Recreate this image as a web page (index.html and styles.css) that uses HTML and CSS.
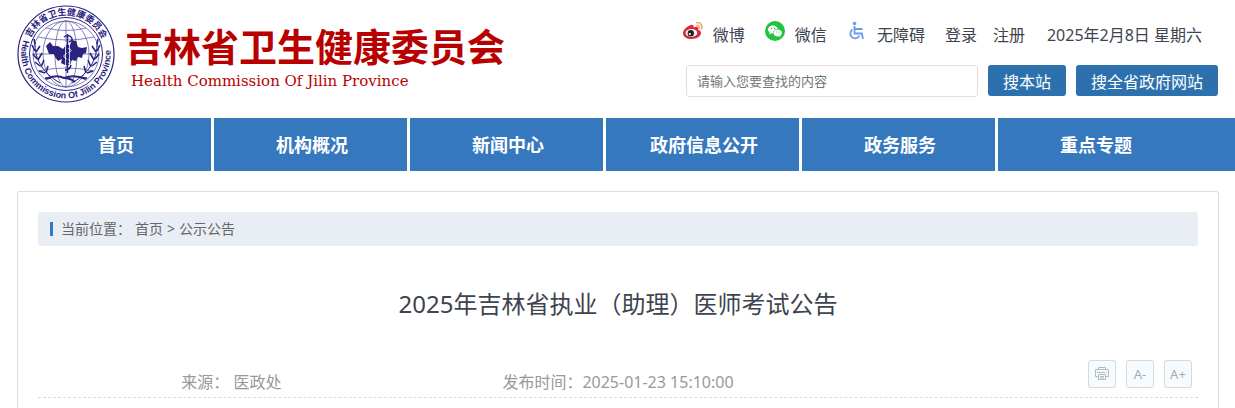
FILE: index.html
```html
<!DOCTYPE html>
<html lang="zh-CN">
<head>
    <meta charset="UTF-8">
    <meta name="viewport" content="width=device-width, initial-scale=1.0">
    <title>2025年吉林省执业（助理）医师考试公告</title>
    <link rel="stylesheet" href="styles.css">
</head>
<body>
    <header class="header">
        <div class="brand">
            <svg class="emblem" viewBox="-49 -49 98 98" aria-hidden="true">
                <defs>
                    <path id="ringTop" d="M-35.5 -16 A39 39 0 0 1 35.5 -16"/>
                    <path id="ringBottom" d="M-42.5 -14 A44.7 44.7 0 1 0 44 -8"/>
                </defs>
                <g fill="none" stroke="#2b2380">
                    <circle r="48" stroke-width="1.2"/>
                    <circle r="36.5" stroke-width="1"/>
                    <g stroke-width="0.8" stroke="#6660a8">
                        <circle r="33"/>
                        <ellipse rx="11" ry="33"/>
                        <ellipse rx="23" ry="33"/>
                        <path d="M0 -33V33M-33 0H33M-28 -17Q0 -11 28 -17M-28 17Q0 11 28 17M-20 -26Q0 -21 20 -26"/>
                    </g>
                    <path d="M-31 -12Q-32 14 -6 29M31 -12Q32 14 6 29" stroke-width="1"/>
                    <path d="M-31 -10l-1-5M-31 -3l-3-6M-30 -2l4-6M-29 5l-4-5M-28 6l4-7M-26 12l-5-4M-25 13l3-7M-21 19l-6-2M-20 19l2-7M-15 24l-6 0M31 -10l1-5M31 -3l3-6M30 -2l-4-6M29 5l4-5M28 6l-4-7M26 12l5-4M25 13l-3-7M21 19l6-2M20 19l-2-7M15 24l6 0" stroke-width="1.6"/>
                    <path d="M-20 25Q-10 20 -2 24Q8 20 20 25M-2 24Q4 24 9 28" stroke-width="2"/>
                </g>
                <path fill="#2b2380" d="M-20 -8L-16 -12 -13 -8 -8 -8 -3 -5 0 -9 4 -9 6 -14 10 -13 12 -7 16 -6 21 -7 20 -1 17 0 16 4 12 3 10 7 6 6 4 11 -1 11 -5 9 -4 5 -8 7 -11 3 -12 0 -17 0z"/>
                <path fill="none" stroke="#fff" stroke-width="0.8" d="M-0.500 -12V12M3.500 -12V12M1 -6q8 2 1 5q-8 3 -1 6q6 2 1 5"/>
                <path fill="none" stroke="#2b2380" stroke-width="1.5" d="M1.500 -20V19M-2 -17q4 -3 7 0q3 3 -2 5M5 11q-1 5 -6 5"/>
                <text class="ring-cn"><textPath href="#ringTop">吉林省卫生健康委员会</textPath></text>
                <text class="ring-en"><textPath href="#ringBottom">Health Commission Of Jilin Province</textPath></text>
            </svg>
            <div class="brand-text">
                <div class="brand-cn">吉林省卫生健康委员会</div>
                <div class="brand-en">Health Commission Of Jilin Province</div>
            </div>
        </div>

        <div class="tools">
            <div class="top-links">
                <a href="#" class="social">
                    <svg class="icon" viewBox="0 0 20 20" aria-hidden="true">
                        <path fill="#d52b3e" d="M8 4C4 5 0 9 0 12c0 4 4 6 8.500 6C14 18 18 15 18 12c0-2-1.500-3-3-3.300C16 6 14 5 10.500 6.500 11 4.500 10 3.500 8 4z"/>
                        <ellipse cx="8.400" cy="12" rx="5.800" ry="3.900" fill="#fff"/>
                        <circle cx="7.800" cy="12.200" r="3.200" fill="#222"/>
                        <circle cx="6.800" cy="13" r="1.100" fill="#fff"/>
                        <path fill="none" stroke="#f5a860" stroke-width="1.500" stroke-linecap="round" d="M13.500 1.700c4-1 6.500 3 5 6.300M14 4.500c2-.4 2.700 1.200 2 2.800"/>
                    </svg>
                    微博
                </a>
                <a href="#" class="social">
                    <svg class="icon" viewBox="0 0 20 20" aria-hidden="true">
                        <circle cx="10" cy="10" r="10" fill="#22c43c"/>
                        <path fill="#fff" d="M8 4.500c-2.800 0-5 1.800-5 4.100 0 1.300.7 2.400 1.800 3.200l-.5 1.600 1.900-1c.6.200 1.200.2 1.800.2C8 9.500 10 8 12.800 8 12.300 6 10.300 4.500 8 4.500z"/>
                        <path fill="#fff" d="M12.700 8.600c-2.400 0-4.200 1.500-4.200 3.400s1.800 3.400 4.200 3.400c.5 0 1-.1 1.400-.2l1.500.8-.4-1.300c1-.6 1.700-1.600 1.700-2.700 0-1.900-1.800-3.400-4.200-3.400z"/>
                        <g fill="#22c43c">
                            <circle cx="6.400" cy="7.500" r=".7"/>
                            <circle cx="9.600" cy="7.500" r=".7"/>
                            <circle cx="11.400" cy="11" r=".6"/>
                            <circle cx="14.100" cy="11" r=".6"/>
                        </g>
                    </svg>
                    微信
                </a>
                <a href="#" class="social">
                    <svg class="icon" viewBox="0 0 20 20" aria-hidden="true">
                        <g fill="none" stroke="#6a9bea" stroke-width="1.800">
                            <path d="M7.500 5V12.500h7.300l1.200 5.500M7.500 8h8"/>
                            <path d="M5.500 8.500a4.800 4.800 0 1 0 7 6"/>
                        </g>
                        <circle cx="7.500" cy="2.500" r="1.800" fill="#6a9bea"/>
                    </svg>
                    无障碍
                </a>
                <a href="#">登录</a>
                <a href="#">注册</a>
                <span class="date">2025年2月8日 星期六</span>
            </div>
            <form class="search">
                <input type="text" class="search-input" placeholder="请输入您要查找的内容" aria-label="搜索">
                <button type="button" class="search-btn">搜本站</button>
                <button type="button" class="search-btn">搜全省政府网站</button>
            </form>
        </div>
    </header>

    <nav class="nav">
        <a href="#">首页</a>
        <a href="#">机构概况</a>
        <a href="#">新闻中心</a>
        <a href="#">政府信息公开</a>
        <a href="#">政务服务</a>
        <a href="#">重点专题</a>
    </nav>

    <main class="content">
        <div class="breadcrumb">
            <span class="breadcrumb-label">当前位置：</span>
            <a href="#">首页</a>
            <span>&gt;</span>
            <a href="#">公示公告</a>
        </div>

        <h1 class="title">2025年吉林省执业（助理）医师考试公告</h1>

        <div class="meta">
            <span>来源： 医政处</span>
            <span>发布时间：2025-01-23 15:10:00</span>
            <div class="actions">
                <button type="button" class="action" aria-label="打印">
                    <svg class="print" viewBox="0 0 16 16" aria-hidden="true">
                        <g fill="none" stroke="#b5babd">
                            <path d="M4.500 3.500v-2h7v2M4.500 10.500h-3v-7h13v7h-3M3 6.500h8M12 6.500h1"/>
                            <path d="M4.500 8.500h7v5h-7zM6 10.500h4M6 12h4"/>
                        </g>
                    </svg>
                </button>
                <button type="button" class="action">A-</button>
                <button type="button" class="action">A+</button>
            </div>
        </div>
    </main>
</body>
</html>
```

FILE: styles.css
```css
* {
    box-sizing: border-box;
}

body {
    margin: 0;
    font-family: "Noto Sans", "Noto Sans CJK SC", sans-serif;
    font-size: 16px;
    line-height: 24px;
    color: #3d4450;
    background: #fff;
}

a {
    color: inherit;
    text-decoration: none;
}

button,
input {
    font-family: inherit;
    margin: 0;
}

/* header */
.header {
    display: flex;
    justify-content: space-between;
    padding: 5px 17px 15px;
}

.brand {
    display: flex;
    gap: 10px;
}

.emblem {
    display: block;
    width: 98px;
    height: 98px;
}

.ring-cn {
    font: bold 9px "Noto Sans CJK SC", sans-serif;
    fill: #2b2380;
}

.ring-en {
    font: bold 9px "Liberation Sans", sans-serif;
    fill: #2b2380;
}

.brand-text {
    padding-top: 18px;
    color: #b80000;
    white-space: nowrap;
}

.brand-cn {
    font-family: "Noto Sans CJK SC", sans-serif;
    font-size: 38px;
    font-weight: bold;
    line-height: 44px;
}

.brand-en {
    padding-left: 6px;
    font-family: "DejaVu Serif", serif;
    font-size: 15px;
    line-height: 28px;
}

.tools {
    display: flex;
    flex-direction: column;
    gap: 16px;
    padding-top: 13px;
}

.top-links {
    display: flex;
    justify-content: flex-end;
    gap: 16px;
    padding: 3px 16px 0 0;
    margin-left: -8px;
    line-height: 28px;
    white-space: nowrap;
}

.social {
    display: flex;
    gap: 10px;
    margin-right: 4px;
}

.icon {
    width: 20px;
    height: 20px;
}

.date {
    margin-left: 6px;
}

.search {
    display: flex;
    align-items: flex-start;
    justify-content: flex-end;
    gap: 10px;
}

.search-input {
    width: 292px;
    height: 32px;
    padding: 0 10px;
    border: 1px solid #ecd9de;
    border-radius: 3px;
    font-size: 13px;
    color: #333;
}

.search-input::placeholder {
    color: #757575;
}

.search-btn {
    height: 31px;
    padding: 0 15px;
    border: 0;
    border-radius: 3px;
    font-size: 16px;
    color: #fff;
    background: #2c71ae;
    cursor: pointer;
}

/* main menu */
.nav {
    display: flex;
    padding-left: 18px;
    background: #3678be;
}

.nav a {
    flex: 0 0 196px;
    padding: 1px 0 0 3px;
    border-right: 3px solid #fff;
    font-size: 18px;
    font-weight: bold;
    line-height: 52px;
    text-align: center;
    color: #fff;
}

.nav a:last-child {
    padding-left: 0;
    border-right: 0;
}

/* article */
.content {
    margin: 20px 16px 0 17px;
    padding: 20px 20px 10px;
    border: 1px solid #ddd;
    border-bottom: 0;
    border-radius: 3px 3px 0 0;
}

.breadcrumb {
    display: flex;
    align-items: center;
    gap: 4px;
    height: 34px;
    padding-left: 12px;
    border-radius: 3px;
    font-size: 14px;
    line-height: 14px;
    color: #666;
    background: #e9eef5;
}

.breadcrumb-label {
    padding-left: 8px;
    border-left: 3px solid #3678be;
}

.title {
    margin: 40px 0 38px;
    font-size: 24px;
    font-weight: normal;
    line-height: 36px;
    text-align: center;
}

.meta {
    display: grid;
    grid-template-columns: repeat(3, 1fr);
    align-items: end;
    padding-bottom: 3px;
    border-bottom: 1px dashed #ddd;
    text-align: center;
    color: #999;
}

.actions {
    display: flex;
    justify-content: flex-end;
    gap: 10px;
    padding: 0 6px 6px 0;
}

.action {
    display: flex;
    align-items: center;
    justify-content: center;
    width: 28px;
    height: 28px;
    padding: 0;
    border: 1px solid #d5dadd;
    border-radius: 3px;
    font-size: 13px;
    color: #aaa;
    background: #f5fbff;
    cursor: pointer;
}

.print {
    width: 16px;
    height: 16px;
}
```
